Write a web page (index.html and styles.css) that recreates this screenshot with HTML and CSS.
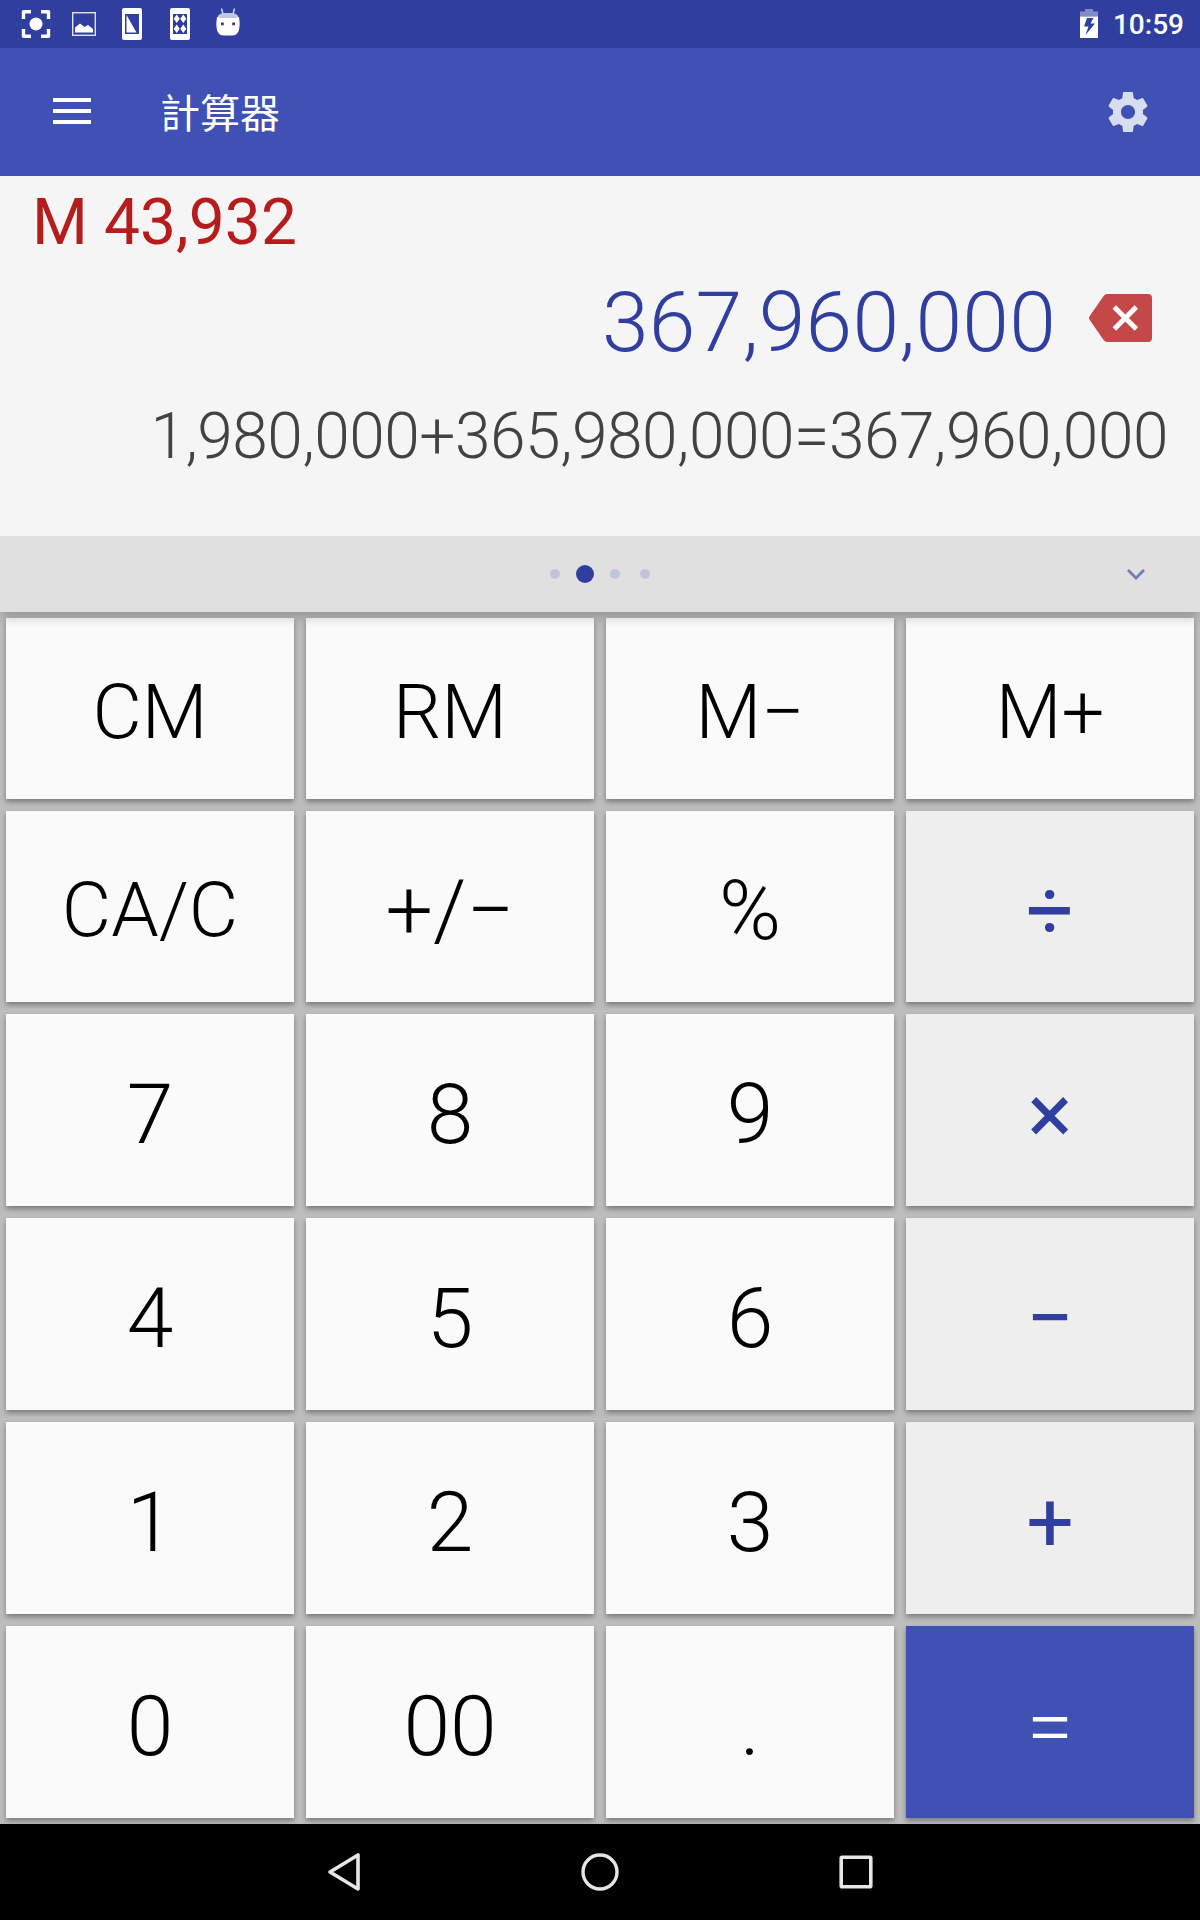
FILE: index.html
```html
<!DOCTYPE html>
<html lang="zh-Hant">
<head>
<meta charset="utf-8">
<title>計算器</title>
<link rel="stylesheet" href="styles.css">
</head>
<body>
<div class="screen">
  <header class="status">
    <svg class="status-left" viewBox="0 0 260 48" width="260" height="48">
      <g fill="none" stroke="#fff" stroke-width="3.4" stroke-linejoin="round"><path d="M23.500 19v-7.300h7.500M41 11.700h7.500v7.300M48.500 29v7.300h-7.500M31 36.300h-7.500v-7.300"/></g>
      <circle cx="36" cy="24" r="6.500" fill="#fff"/>
      <rect x="72.700" y="12.700" width="22.600" height="22.600" fill="none" stroke="#fff" stroke-opacity=".85" stroke-width="1.400"/>
      <path fill="#fff" d="M75 32.500v-5l5-4 4.500 3.500 3.500-2 5 4v3.500z"/>
      <path fill="#fff" fill-rule="evenodd" d="M124 8h16a2 2 0 0 1 2 2v28a2 2 0 0 1-2 2h-16a2 2 0 0 1-2-2v-28a2 2 0 0 1 2-2zM125 14v20h14v-20z"/>
      <path fill="#fff" d="M126.500 15l10 17.500h-10z"/>
      <path fill="#fff" fill-rule="evenodd" d="M172 8h16a2 2 0 0 1 2 2v28a2 2 0 0 1-2 2h-16a2 2 0 0 1-2-2v-28a2 2 0 0 1 2-2zM173 14v20h14v-20z"/>
      <path fill="#fff" d="M176.700 14.500l3 4.300-3 4.300-3-4.300zM183.300 14.500l3 4.300-3 4.300-3-4.300zM176.700 24.500l3 4.300-3 4.300-3-4.300zM183.300 24.500l3 4.300-3 4.300-3-4.300z"/>
      <path fill="none" stroke="#d5d8ef" stroke-width="1.400" d="M221.500 8.500l1.500 5.500M234.500 8.500l-1.500 5.500"/>
      <path fill="#c3c7e7" d="M217.500 17.500q1-4.500 7-4.500h7q6 0 7 4.500z"/>
      <path fill="#fff" fill-rule="evenodd" d="M217 17l4 .5h14l4-.5q1.500 7 0 13-1.500 5.500-7 5.500h-8q-5.500 0-7-5.500-1.500-6 0-13zM221 22.500v2.800h2.800v-2.800zM232.200 22.500v2.800h2.800v-2.800z"/>
    </svg>
    <div class="status-right">
      <svg viewBox="0 0 20 30" width="20" height="30"><path fill="#fff" fill-opacity=".4" d="M6 0h8v2.500h5v5h-18v-5h5z"/><path fill="#fff" fill-rule="evenodd" d="M1 7.500h18v21.500h-18zM8 9l-3 8.500h4.500l-3 8.500 9.500-11.500h-4.500l3-5.500z"/></svg>
      <span class="clock">10:59</span>
    </div>
  </header>
  <div class="appbar">
    <svg class="menu" viewBox="0 0 38 26" width="38" height="26"><path fill="#fff" d="M0 0h38v4h-38zM0 11h38v4h-38zM0 22h38v4h-38z"/></svg>
    <h1 class="title">計算器</h1>
    <svg class="gear" viewBox="0 0 24 24" width="48" height="48"><path fill="#fff" fill-opacity=".8" d="M19.430 12.980c.04-.32.07-.64.07-.98s-.03-.66-.07-.98l2.110-1.650c.19-.15.24-.42.12-.64l-2-3.460c-.12-.22-.39-.3-.61-.22l-2.490 1c-.52-.4-1.080-.73-1.690-.98l-.38-2.650C14.460 2.180 14.250 2 14 2h-4c-.25 0-.46.180-.49.42l-.38 2.650c-.61.250-1.170.59-1.690.98l-2.490-1c-.23-.09-.49 0-.61.22l-2 3.460c-.13.220-.07.49.12.64l2.110 1.650c-.04.32-.07.65-.07.98s.03.66.07.98l-2.110 1.650c-.19.150-.24.42-.12.64l2 3.460c.12.220.39.300.61.220l2.490-1c.52.400 1.080.730 1.690.980l.38 2.650c.03.240.24.420.49.420h4c.25 0 .46-.18.49-.42l.38-2.650c.61-.25 1.170-.59 1.690-.98l2.490 1c.23.090.49 0 .61-.22l2-3.460c.12-.22.07-.49-.12-.64l-2.110-1.650zM12 15.500c-1.930 0-3.500-1.570-3.500-3.500s1.570-3.500 3.500-3.500 3.500 1.570 3.500 3.500-1.570 3.500-3.500 3.500z"/></svg>
  </div>
  <section class="display">
    <div class="memory">M 43,932</div>
    <div class="result-row">
      <div class="result">367,960,000</div>
      <svg viewBox="0 0 64 48" width="64" height="48"><path fill="#c54848" d="M19 0h41a4 4 0 0 1 4 4v40a4 4 0 0 1-4 4h-41q-2 0-3.200-1.800l-14.400-20.700q-1-1.500 0-3l14.400-20.700q1.200-1.800 3.200-1.800z"/><path fill="none" stroke="#fff" stroke-width="5" d="M26.300 13l22 22M48.300 13l-22 22"/></svg>
    </div>
    <div class="expression">1,980,000+365,980,000=367,960,000</div>
  </section>
  <div class="pager">
    <div class="dots"><i class="dot"></i><i class="dot active"></i><i class="dot"></i><i class="dot"></i></div>
    <svg class="chevron" viewBox="0 0 20 12" width="20" height="12"><path fill="none" stroke="#707cb4" stroke-width="2.800" d="M2 2l8 8 8-8"/></svg>
  </div>
  <main class="keypad">
    <button class="key small">CM</button><button class="key small">RM</button><button class="key small">M−</button><button class="key small">M+</button>
    <button class="key small">CA/C</button><button class="key func">+/−</button><button class="key func">%</button><button class="key func op">÷</button>
    <button class="key">7</button><button class="key">8</button><button class="key">9</button><button class="key op">×</button>
    <button class="key">4</button><button class="key">5</button><button class="key">6</button><button class="key op">−</button>
    <button class="key">1</button><button class="key">2</button><button class="key">3</button><button class="key op">+</button>
    <button class="key">0</button><button class="key">00</button><button class="key">.</button><button class="key equals">=</button>
  </main>
  <nav class="navbar">
    <svg viewBox="0 0 36 48" width="36" height="48"><path fill="none" stroke="#e6e6e6" stroke-width="3.600" stroke-linejoin="round" d="M32 7v34l-28-17z"/></svg>
    <svg viewBox="0 0 40 48" width="40" height="48"><circle cx="20" cy="24" r="17" fill="none" stroke="#e6e6e6" stroke-width="3.400"/></svg>
    <svg viewBox="0 0 36 48" width="36" height="48"><rect x="3.200" y="9.200" width="29.600" height="29.600" rx="1" fill="none" stroke="#e6e6e6" stroke-width="3.600"/></svg>
  </nav>
</div>
</body>
</html>
```
FILE: styles.css
```css
* { box-sizing: border-box; }
body { margin: 0; font-family: Roboto, "Noto Sans CJK TC", sans-serif; }
svg { display: block; flex: none; }
.screen { width: 1200px; height: 1920px; display: flex; flex-direction: column; overflow: hidden; }
.status { height: 48px; background: #303f9f; display: flex; justify-content: space-between; }
.status-right { display: flex; align-items: center; gap: 14px; padding-right: 16px; }
.clock { font-size: 28px; line-height: 48px; font-weight: 500; color: #fff; padding-top: 2px; }
.appbar { height: 128px; background: #3f51b5; display: flex; align-items: center; padding: 0 48px 0 53px; }
.menu { margin-top: -2px; }
.title { margin: 0 auto 0 69px; padding-top: 5px; font-size: 40px; line-height: 48px; font-weight: 400; color: #fff; }
.display { height: 360px; background: #f5f5f5; padding: 0 32px; }
.memory { height: 92px; font-size: 64px; line-height: 94px; letter-spacing: 0.1px; color: #b71c1c; }
.result-row { height: 100px; display: flex; justify-content: flex-end; align-items: center; gap: 32px; padding-right: 16px; }
.result { padding-top: 9px; font-size: 84px; line-height: 100px; font-weight: 300; letter-spacing: 0.22px; color: #303f9f; }
.expression { font-size: 64px; line-height: 138px; font-weight: 300; letter-spacing: -0.46px; color: #424242; text-align: right; white-space: nowrap; }
.pager { height: 76px; background: #e0e0e0; display: grid; grid-template-columns: 1fr auto 1fr; align-items: center; z-index: 1; box-shadow: 0 8px 10px -2px rgba(0,0,0,.2); }
.dots { grid-column: 2; display: flex; align-items: center; gap: 20px; }
.dot { width: 10px; height: 10px; border-radius: 50%; background: #c0c5de; }
.dot.active { width: 18px; height: 18px; margin: 0 -4px; background: #303f9f; }
.chevron { justify-self: end; margin-right: 54px; }
.keypad { height: 1212px; background: #bdbdbd; padding: 6px; display: grid; grid-template-columns: repeat(4, 288px); grid-template-rows: 181px 191px repeat(4, 192px); gap: 12px; }
.key { border: 0; padding: 10px 0 0; background: #fafafa; color: #000; font: 300 84px/98px Roboto, sans-serif; box-shadow: 0 3px 5px rgba(0,0,0,.35); }
.key.func { padding-top: 8px; }
.key.small { padding-top: 6px; font-size: 76px; }
.key.op { background: #eee; color: #303f9f; font-weight: 400; }
.key.equals { background: #3f51b5; color: #fff; }
.navbar { height: 96px; background: #000; display: flex; justify-content: center; align-items: center; gap: 218px; }
```
